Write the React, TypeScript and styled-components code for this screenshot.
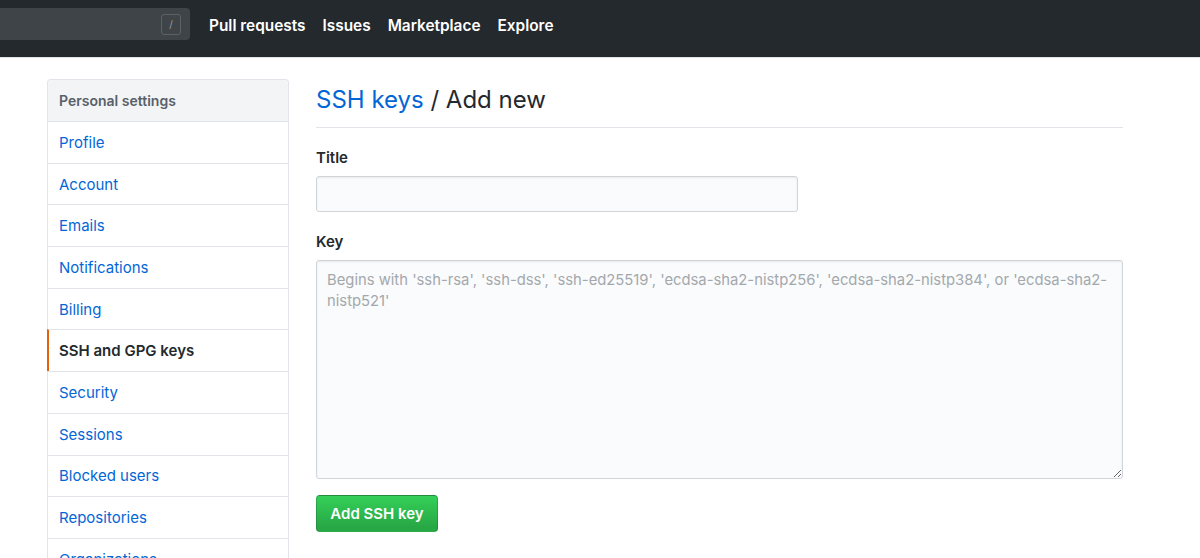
import React from "react";
import styled, { createGlobalStyle } from "styled-components";

const Global = createGlobalStyle`
  html, body { margin: 0; padding: 0; background: #fff; }
  body {
    font-family: Inter, "Noto Sans", "Liberation Sans", sans-serif;
    color: #24292e;
    width: 1200px;
    height: 558px;
    overflow: hidden;
  }
  * { box-sizing: border-box; }
`;

const Header = styled.header`
  height: 58px;
  background: #24292e;
  border-bottom: 1px solid #e1e4e8;
  display: flex;
  align-items: center;
  padding-bottom: 8px;
  padding-top: 8px;
`;

const Search = styled.div`
  width: 190px;
  height: 32px;
  margin-top: -9px;
  background: #3f4448;
  border-radius: 0 4px 4px 0;
  display: flex;
  align-items: center;
  justify-content: flex-end;
  padding-right: 9px;
`;

const SlashKey = styled.span`
  width: 20px;
  height: 21px;
  border: 1px solid #5a6168;
  border-radius: 3px;
  color: #959da5;
  font-size: 10px;
  display: flex;
  align-items: center;
  justify-content: center;
`;

const Nav = styled.nav`
  display: flex;
  gap: 17px;
  margin-left: 19px;
  margin-top: -7px;
`;

const NavLink = styled.a`
  color: #fff;
  font-weight: 600;
  font-size: 15.4px;
  text-decoration: none;
`;

const Layout = styled.div`
  display: flex;
  gap: 27px;
  padding: 21px 0 0 47px;
  width: 1123px;
`;

const Sidebar = styled.nav`
  width: 242px;
  flex: none;
  border: 1px solid #e1e4e8;
  border-radius: 4px 4px 0 0;
  border-bottom: none;
`;

const SideHeader = styled.div`
  height: 41px;
  background: #f3f4f6;
  color: #586069;
  font-size: 14px;
  font-weight: 600;
  display: flex;
  align-items: center;
  padding-left: 11px;
  border-radius: 4px 4px 0 0;
`;

const SideItem = styled.a<{ $active?: boolean }>`
  display: flex;
  align-items: center;
  height: 41.7px;
  border-top: 1px solid #e1e4e8;
  padding-left: ${(p) => (p.$active ? "10px" : "11px")};
  border-left: ${(p) => (p.$active ? "2px solid #e36209" : "none")};
  margin-left: ${(p) => (p.$active ? "-1px" : "0")};
  color: ${(p) => (p.$active ? "#24292e" : "#0366d6")};
  font-weight: ${(p) => (p.$active ? 600 : 400)};
  font-size: 15px;
  text-decoration: none;
`;

const Main = styled.main`
  flex: 1;
  min-width: 0;
`;

const Heading = styled.h2`
  margin: 0;
  font-size: 24px;
  font-weight: 400;
  line-height: 36px;
  padding-top: 3px;
  padding-bottom: 9px;
  border-bottom: 1px solid #e1e4e8;
  color: #24292e;
`;

const Crumb = styled.a`
  color: #0366d6;
  text-decoration: none;
`;

const Field = styled.div`
  margin-top: 20px;
`;

const Label = styled.label`
  display: block;
  font-size: 15px;
  font-weight: 600;
  line-height: 20px;
  margin-bottom: 8px;
`;

const Input = styled.input`
  display: block;
  width: 482px;
  height: 36px;
  border: 1px solid #d1d5da;
  border-radius: 3px;
  background: #fafbfc;
  box-shadow: inset 0 1px 2px rgba(27, 31, 35, 0.075);
  font: inherit;
  padding: 0 10px;
`;

const TextArea = styled.textarea`
  display: block;
  width: 100%;
  height: 219px;
  border: 1px solid #d1d5da;
  border-radius: 3px;
  background: #fafbfc;
  box-shadow: inset 0 1px 2px rgba(27, 31, 35, 0.075);
  font-family: inherit;
  font-size: 14.8px;
  line-height: 21px;
  padding: 9px 6px 9px 10px;
  resize: vertical;
  &::placeholder { color: #a3a8ad; }
`;

const Button = styled.button`
  margin-top: 16px;
  width: 122px;
  height: 37px;
  border: 1px solid rgba(27, 31, 35, 0.2);
  border-radius: 4px;
  background: linear-gradient(-180deg, #34d058 0%, #28a745 90%);
  color: #fff;
  font-family: inherit;
  font-size: 15px;
  font-weight: 600;
  cursor: pointer;
`;

const items = [
  "Profile",
  "Account",
  "Emails",
  "Notifications",
  "Billing",
  "SSH and GPG keys",
  "Security",
  "Sessions",
  "Blocked users",
  "Repositories",
  "Organizations",
];

export default function App() {
  return (
    <>
      <Global />
      <Header>
        <Search>
          <SlashKey>/</SlashKey>
        </Search>
        <Nav>
          <NavLink href="#">Pull requests</NavLink>
          <NavLink href="#">Issues</NavLink>
          <NavLink href="#">Marketplace</NavLink>
          <NavLink href="#">Explore</NavLink>
        </Nav>
      </Header>
      <Layout>
        <Sidebar>
          <SideHeader>Personal settings</SideHeader>
          {items.map((it) => (
            <SideItem key={it} href="#" $active={it === "SSH and GPG keys"}>
              {it}
            </SideItem>
          ))}
        </Sidebar>
        <Main>
          <Heading>
            <Crumb href="#">SSH keys</Crumb> / Add new
          </Heading>
          <Field>
            <Label>Title</Label>
            <Input type="text" />
          </Field>
          <Field>
            <Label>Key</Label>
            <TextArea placeholder="Begins with 'ssh-rsa', 'ssh-dss', 'ssh-ed25519', 'ecdsa-sha2-nistp256', 'ecdsa-sha2-nistp384', or 'ecdsa-sha2-nistp521'" />
          </Field>
          <Button>Add SSH key</Button>
        </Main>
      </Layout>
    </>
  );
}
